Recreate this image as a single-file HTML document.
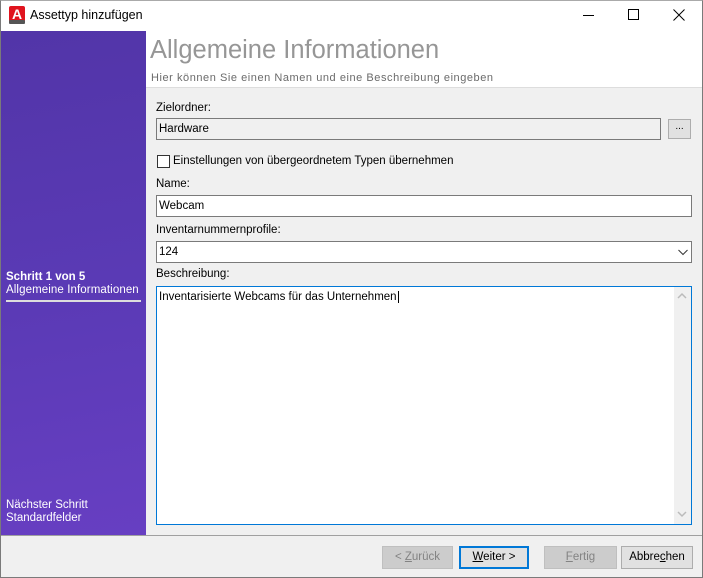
<!DOCTYPE html><html><head><meta charset="utf-8"><style>
*{margin:0;padding:0;box-sizing:border-box}
body{width:703px;height:578px;position:relative;background:#f0f0f0;font-family:"Liberation Sans",sans-serif;font-size:11.5px;color:#000;overflow:hidden}
.a{position:absolute;white-space:nowrap}
.win{position:absolute;left:0;top:0;width:703px;height:578px;border:1px solid #7a7a7a;border-top-color:#aaa}
.inp{position:absolute;border:1px solid #7a7a7a;background:#fff;padding:4px 2px 2px;font-size:11.5px;line-height:13px}
.btn{position:absolute;height:23px;border:1px solid #adadad;background:#e1e1e1;text-align:center;line-height:21px;font-size:11.5px}
.dis{background:#cccccc;border-color:#bfbfbf;color:#838383}
</style></head><body>
<div class="a" style="left:0;top:0;width:703px;height:31px;background:#fff"></div>
<svg class="a" style="left:9px;top:6px" width="16" height="18"><rect x="0" y="0" width="16" height="16" rx="2" fill="#e0141e"/><rect x="0" y="14" width="16" height="4" rx="1" fill="#555"/><text x="8" y="13" font-family="Liberation Sans" font-weight="bold" font-size="14" fill="#fff" text-anchor="middle">A</text></svg>
<div class="a" style="left:30px;top:8px;font-size:12.5px">Assettyp hinzufügen</div>
<div class="a" style="left:583px;top:15px;width:11px;height:1px;background:#000"></div>
<div class="a" style="left:628px;top:9px;width:11px;height:11px;border:1px solid #000"></div>
<svg class="a" style="left:673px;top:9px" width="12" height="12"><path d="M0.5 0.5L11.5 11.5M11.5 0.5L0.5 11.5" stroke="#000" stroke-width="1"/></svg>
<div class="a" style="left:1px;top:31px;width:145px;height:504px;background:linear-gradient(170deg,#5235a8 0%,#5a3ab5 50%,#673fc2 100%)"></div>
<div class="a" style="left:6px;top:271px;color:#fff;font-weight:bold;font-size:11.5px">Schritt 1 von 5</div>
<div class="a" style="left:6px;top:284px;color:#fff;font-size:11.5px;letter-spacing:0.1px">Allgemeine Informationen</div>
<div class="a" style="left:6px;top:300px;width:135px;height:2px;background:#ddd"></div>
<div class="a" style="left:6px;top:499px;color:#fff">Nächster Schritt</div>
<div class="a" style="left:6px;top:512px;color:#fff">Standardfelder</div>
<div class="a" style="left:146px;top:31px;width:556px;height:57px;background:#fff;border-bottom:1px solid #ddd"></div>
<div class="a" style="left:150px;top:36px;font-size:25.5px;color:#969696">Allgemeine Informationen</div>
<div class="a" style="left:151px;top:72px;font-size:11px;color:#6b6b6b;letter-spacing:0.55px">Hier können Sie einen Namen und eine Beschreibung eingeben</div>
<div class="a" style="left:156px;top:102px">Zielordner:</div>
<div class="inp" style="left:156px;top:118px;width:505px;height:22px;background:#f0f0f0">Hardware</div>
<div class="btn" style="left:668px;top:119px;width:23px;height:20px;line-height:14px;font-size:10px">...</div>
<div class="a" style="left:157px;top:155px;width:13px;height:13px;border:1px solid #333;background:#fff"></div>
<div class="a" style="left:173px;top:155px">Einstellungen von übergeordnetem Typen übernehmen</div>
<div class="a" style="left:156px;top:178px">Name:</div>
<div class="inp" style="left:156px;top:195px;width:536px;height:22px">Webcam</div>
<div class="a" style="left:156px;top:224px">Inventarnummernprofile:</div>
<div class="inp" style="left:156px;top:241px;width:536px;height:22px">124</div>
<svg class="a" style="left:678px;top:249px" width="10" height="7"><path d="M0.5 1L5 5.5L9.5 1" stroke="#333" fill="none"/></svg>
<div class="a" style="left:156px;top:268px">Beschreibung:</div>
<div class="inp" style="left:156px;top:286px;width:536px;height:239px;border-color:#0078d7;padding:4px 2px">Inventarisierte Webcams für das Unternehmen<span style="border-left:1px solid #000;margin-left:1px"></span></div>
<div class="a" style="left:674px;top:287px;width:17px;height:237px;background:#f0f0f0"></div>
<svg class="a" style="left:677px;top:292px" width="10" height="7"><path d="M1 6L5 2L9 6" stroke="#bbb" stroke-width="1.5" fill="none"/></svg>
<svg class="a" style="left:677px;top:511px" width="10" height="7"><path d="M1 1L5 5L9 1" stroke="#bbb" stroke-width="1.5" fill="none"/></svg>
<div class="a" style="left:1px;top:535px;width:701px;height:1px;background:#a0a0a0"></div>
<div class="btn dis" style="left:382px;top:546px;width:71px">&lt; <u>Z</u>urück</div>
<div class="btn" style="left:459px;top:546px;width:70px;border:2px solid #0078d7;line-height:19px"><u>W</u>eiter &gt;</div>
<div class="btn dis" style="left:544px;top:546px;width:73px"><u>F</u>ertig</div>
<div class="btn" style="left:621px;top:546px;width:72px">Abbre<u>c</u>hen</div>
<div class="win"></div>
</body></html>
